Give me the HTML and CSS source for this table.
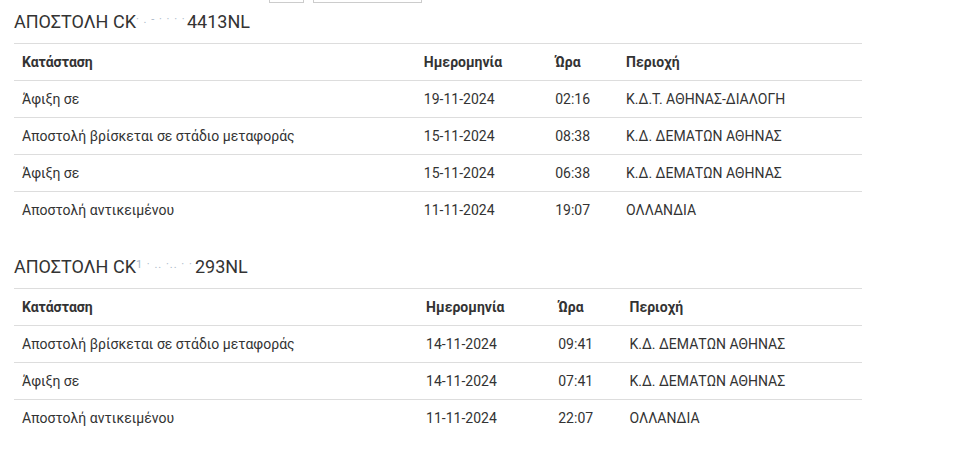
FILE: index.html
```html
<!DOCTYPE html>
<html lang="el">
  <head>
    <meta charset="UTF-8" />
    <meta name="viewport" content="width=device-width, initial-scale=1.0" />
    <title>Αποστολές</title>
    <link rel="stylesheet" href="styles.css">
  </head>
  <body>
    <div class="container">
      <div class="toolbar">
        <div class="tool small"></div>
        <div class="tool wide"></div>
      </div>

      <h4 class="title">ΑΠΟΣΤΟΛΗ CK<span class="masked first">· . - · · · ·</span>4413NL</h4>
      <table class="track">
        <thead>
          <tr>
            <th>Κατάσταση</th>
            <th>Ημερομηνία</th>
            <th>Ώρα</th>
            <th>Περιοχή</th>
          </tr>
        </thead>
        <tbody>
          <tr>
            <td>Άφιξη σε</td>
            <td>19-11-2024</td>
            <td>02:16</td>
            <td>Κ.Δ.Τ. ΑΘΗΝΑΣ-ΔΙΑΛΟΓΗ</td>
          </tr>
          <tr>
            <td>Αποστολή βρίσκεται σε στάδιο μεταφοράς</td>
            <td>15-11-2024</td>
            <td>08:38</td>
            <td>Κ.Δ. ΔΕΜΑΤΩΝ ΑΘΗΝΑΣ</td>
          </tr>
          <tr>
            <td>Άφιξη σε</td>
            <td>15-11-2024</td>
            <td>06:38</td>
            <td>Κ.Δ. ΔΕΜΑΤΩΝ ΑΘΗΝΑΣ</td>
          </tr>
          <tr>
            <td>Αποστολή αντικειμένου</td>
            <td>11-11-2024</td>
            <td>19:07</td>
            <td>ΟΛΛΑΝΔΙΑ</td>
          </tr>
        </tbody>
      </table>

      <h4 class="title">ΑΠΟΣΤΟΛΗ CK<span class="masked second">1 · .. ·.. · ·</span>293NL</h4>
      <table class="track">
        <thead>
          <tr>
            <th>Κατάσταση</th>
            <th>Ημερομηνία</th>
            <th>Ώρα</th>
            <th>Περιοχή</th>
          </tr>
        </thead>
        <tbody>
          <tr>
            <td>Αποστολή βρίσκεται σε στάδιο μεταφοράς</td>
            <td>14-11-2024</td>
            <td>09:41</td>
            <td>Κ.Δ. ΔΕΜΑΤΩΝ ΑΘΗΝΑΣ</td>
          </tr>
          <tr>
            <td>Άφιξη σε</td>
            <td>14-11-2024</td>
            <td>07:41</td>
            <td>Κ.Δ. ΔΕΜΑΤΩΝ ΑΘΗΝΑΣ</td>
          </tr>
          <tr>
            <td>Αποστολή αντικειμένου</td>
            <td>11-11-2024</td>
            <td>22:07</td>
            <td>ΟΛΛΑΝΔΙΑ</td>
          </tr>
        </tbody>
      </table>
    </div>
  </body>
</html>
```

FILE: styles.css
```css
body {
  margin: 0;
  background-color: #fff;
  color: #333;
  font-family: Roboto, "Liberation Sans", sans-serif;
  font-size: 14px;
  line-height: 20px;
}
.container {
  width: 848px;
  padding-left: 14px;
}
.toolbar {
  display: flex;
  height: 3px;
  padding-left: 255px;
  gap: 9px;
}
.tool {
  height: 2px;
  border: 1px solid #ccc;
  border-top: none;
  background-color: #fff;
}
.tool.small {
  width: 33px;
}
.tool.wide {
  width: 107px;
}
.title {
  margin: 9px 0 11px;
  font-size: 18px;
  font-weight: 400;
  line-height: 1.1;
  color: #333;
}
.masked {
  display: inline-block;
  color: #a9b8c8;
  font-size: 11px;
  letter-spacing: 1px;
  white-space: pre;
  overflow: hidden;
  vertical-align: 2px;
}
.masked.first {
  width: 51px;
}
.masked.second {
  width: 59px;
}
.track {
  width: 100%;
  border-collapse: collapse;
  border-spacing: 0;
  margin-bottom: 29px;
}
.track th,
.track td {
  padding: 8px;
  text-align: left;
  vertical-align: top;
  border-top: 1px solid #ddd;
  white-space: nowrap;
}
.track th {
  font-weight: 700;
}
```
